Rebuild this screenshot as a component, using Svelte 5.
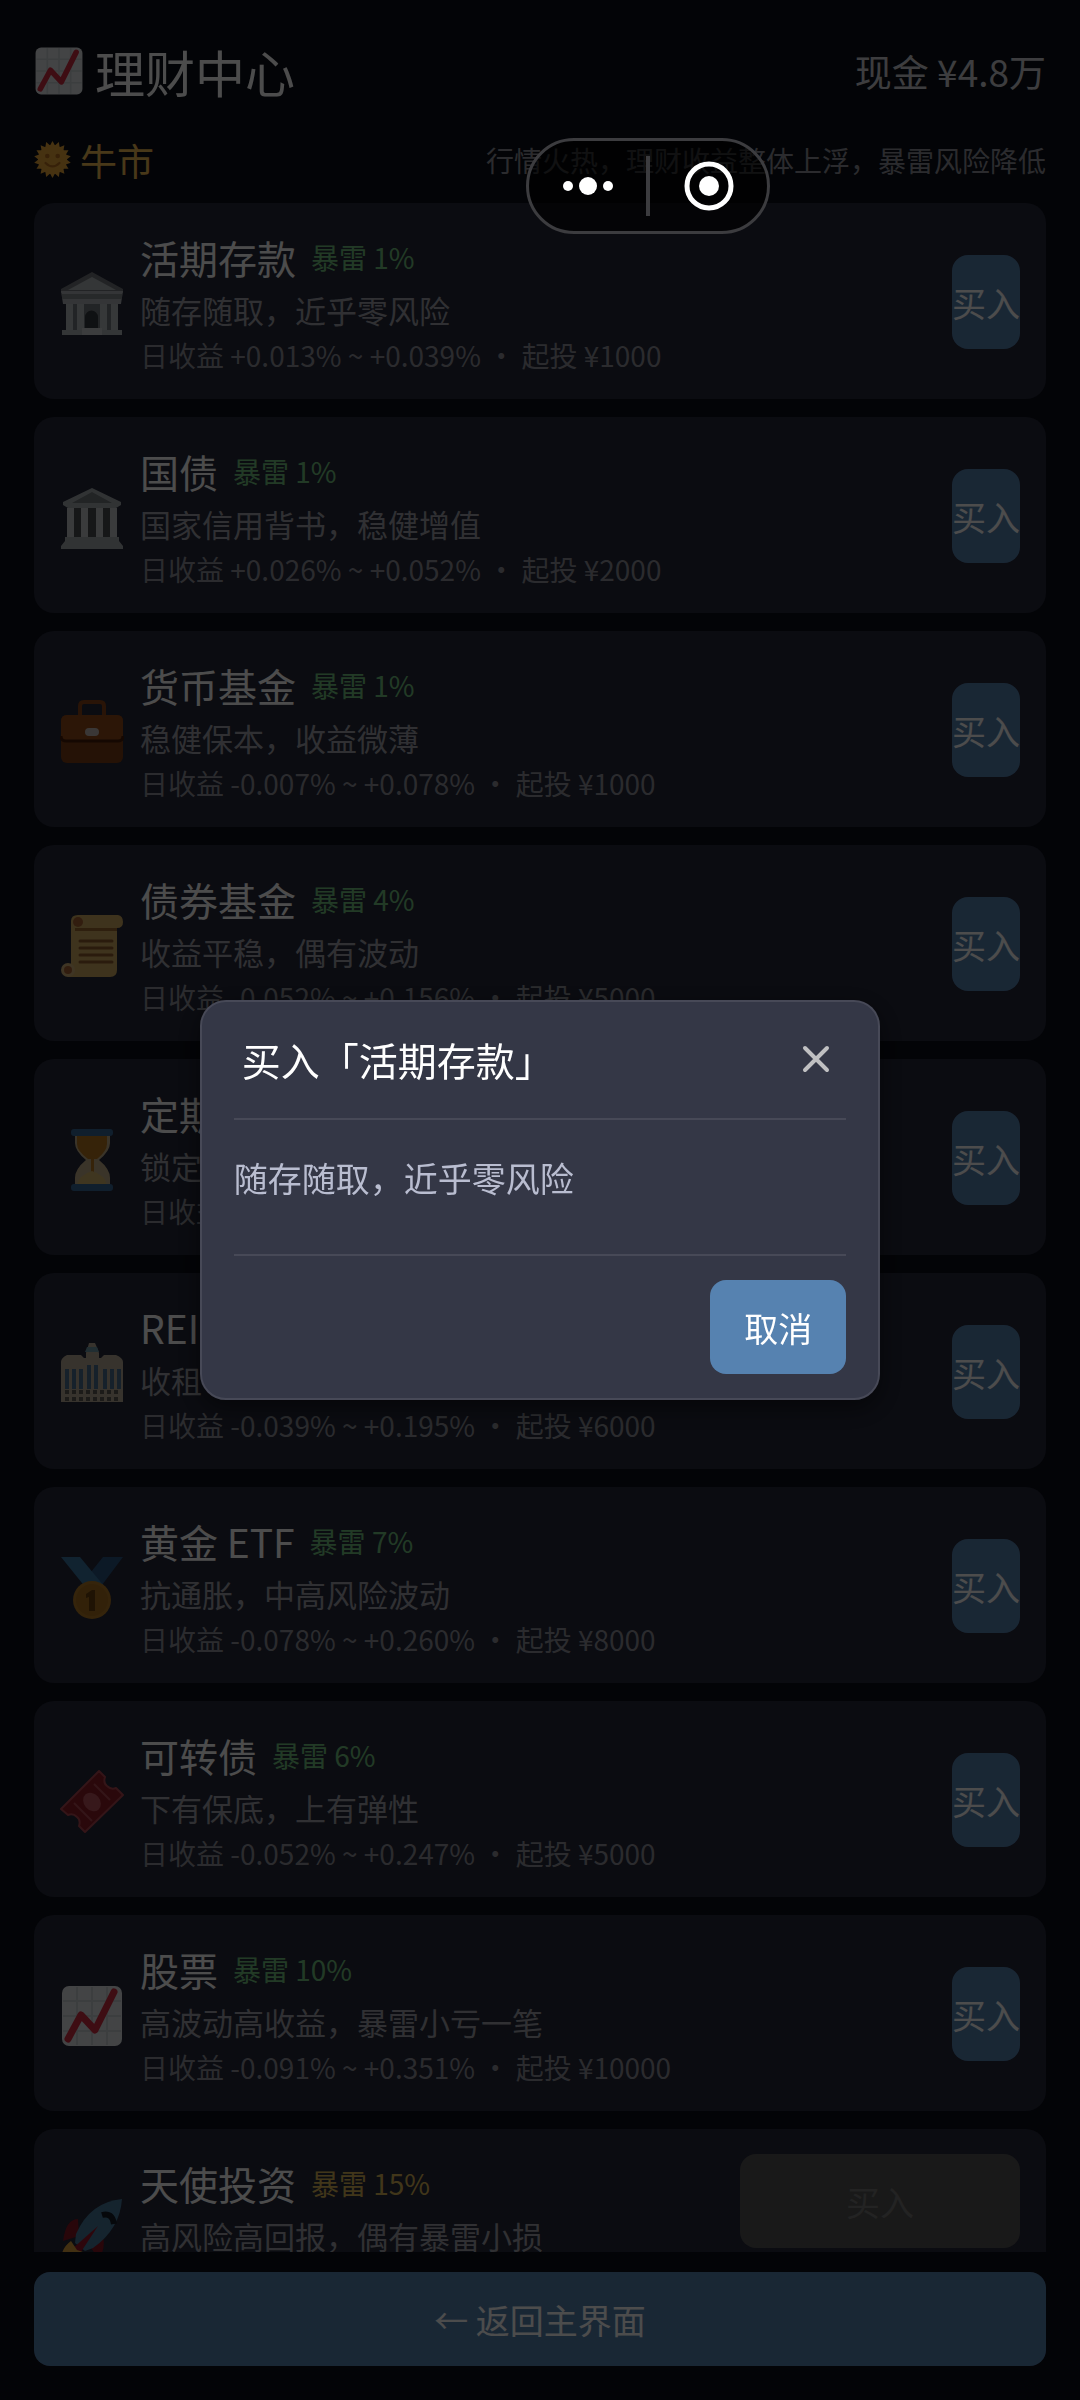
<script>
	// Data
	const products = [
		{ icon: 'bank', name: '活期存款', risk: 1, desc: '随存随取，近乎零风险', low: '+0.013', high: '+0.039', min: 1000 },
		{ icon: 'museum', name: '国债', risk: 1, desc: '国家信用背书，稳健增值', low: '+0.026', high: '+0.052', min: 2000 },
		{ icon: 'briefcase', name: '货币基金', risk: 1, desc: '稳健保本，收益微薄', low: '-0.007', high: '+0.078', min: 1000 },
		{ icon: 'scroll', name: '债券基金', risk: 4, desc: '收益平稳，偶有波动', low: '-0.052', high: '+0.156', min: 5000 },
		{ icon: 'hourglass', name: '定期', risk: null, desc: '锁定', low: null, high: null, min: null },
		{ icon: 'building', name: 'REI', risk: null, desc: '收租', low: '-0.039', high: '+0.195', min: 6000 },
		{ icon: 'medal', name: '黄金 ETF', risk: 7, desc: '抗通胀，中高风险波动', low: '-0.078', high: '+0.260', min: 8000 },
		{ icon: 'ticket', name: '可转债', risk: 6, desc: '下有保底，上有弹性', low: '-0.052', high: '+0.247', min: 5000 },
		{ icon: 'chart', name: '股票', risk: 10, desc: '高波动高收益，暴雷小亏一笔', low: '-0.091', high: '+0.351', min: 10000 },
		{ icon: 'rocket', name: '天使投资', risk: 15, desc: '高风险高回报，偶有暴雷小损', locked: true }
	];

	let selected = $state(products[0]);

	function close() {
		selected = null;
	}
</script>

{#snippet icon(kind)}
	<svg class="icon" viewBox="0 0 64 64" aria-hidden="true">
		{#if kind === 'chart'}
			<rect x="2" y="2" width="60" height="60" rx="7" fill="#dfe4e6" />
			<path d="M17 3v58M32 3v58M47 3v58M3 17h58M3 32h58M3 47h58" stroke="#c8d0d4" stroke-width="2" />
			<path d="M8 55 21 31l14 15L54 8" fill="none" stroke="#d02c42" stroke-width="7" stroke-linecap="round" stroke-linejoin="round" />
		{:else if kind === 'sun'}
			<g fill="#eaa83a">
				{#each Array(18) as _, i}
					<path d="M27 9 32 0l5 9z" transform="rotate({i * 20} 32 32)" />
				{/each}
				<circle cx="32" cy="32" r="25" />
			</g>
			<circle cx="23" cy="26" r="4" fill="#b87020" />
			<circle cx="41" cy="26" r="4" fill="#b87020" />
			<path d="M20 38q12 12 24 0" fill="none" stroke="#b87020" stroke-width="4" stroke-linecap="round" />
		{:else if kind === 'bank'}
			<path d="M32 0 1 17v4h62v-4z" fill="#73777c" />
			<path d="M32 5 8 18h48z" fill="#aeb4b8" />
			<path d="M1 19h62l-2 13H3z" fill="#adb3b7" />
			<path d="M2 22h60v5H2z" fill="#83898d" />
			<path d="M6 32h52v26H6z" fill="#747b80" />
			<path d="M6 32h7v26H6zM17 32h7v26h-7zM40 32h7v26h-7zM51 32h7v26h-7z" fill="#b5bbc0" />
			<path d="M25 58V45a6 6 0 0 1 13 0v13z" fill="#353b40" />
			<path d="M2 58h60v5H2z" fill="#b0b5b9" />
			<path d="M22 56h20v7H22z" fill="#c8cccf" />
		{:else if kind === 'museum'}
			<path d="M32 2 3 16v3l5 3h48l5-3v-3z" fill="#a6acb0" />
			<path d="M32 6 12 17h40z" fill="#72787c" />
			<path d="M7 22h7v29H7zM21 22h7v29h-7zM36 22h7v29h-7zM50 22h7v29h-7z" fill="#c1c5c8" />
			<path d="M14 22h7v29h-7zM28 22h8v29h-8zM43 22h7v29h-7z" fill="#4a4f53" />
			<path d="M5 51h54v4l4 5v3H1v-3l4-5z" fill="#a5aaad" />
		{:else if kind === 'briefcase'}
			<path d="M20 15V6q0-4 4-4h16q4 0 4 4v9" fill="none" stroke="#8a4518" stroke-width="4" />
			<rect x="1" y="15" width="62" height="48" rx="6" fill="#7c3e14" />
			<path d="M1 21q0-6 6-6h50q6 0 6 6v16q0 4-4 4H5q-4 0-4-4z" fill="#934b1a" />
			<path d="M1 36q0 5 5 5h52q5 0 5-5" fill="none" stroke="#481d08" stroke-width="3" />
			<rect x="25" y="28" width="14" height="8" rx="4" fill="#c2bab5" />
		{:else if kind === 'scroll'}
			<path d="M11 7q0-6 7-6h40q5 1 5 7t-6 6v42q0 7-7 7H8l3-10z" fill="#d0ac62" />
			<path d="M15 14h42v3H15z" fill="#9b6a31" />
			<circle cx="18" cy="8" r="5" fill="#a76334" />
			<circle cx="8" cy="56" r="7" fill="#d2b17a" />
			<circle cx="8" cy="56" r="4" fill="#a76334" />
			<path d="M20 27h32M20 34h32M20 41h32M20 48h32" stroke="#8e5b2d" stroke-width="3" stroke-linecap="round" />
		{:else if kind === 'hourglass'}
			<path d="M15 5h35v10q0 8-11 17 11 9 11 18v9H15v-9q0-9 11-18-11-9-11-17z" fill="#c4b08a" />
			<path d="M17 8h30v8q0 7-10 15H28q-11-8-11-15z" fill="#b47621" />
			<path d="M31 31h3v23h-3z" fill="#b47621" />
			<path d="M17 57q2-10 15-14 13 4 15 14z" fill="#d2b46c" />
			<rect x="11" y="1" width="42" height="7" rx="3" fill="#376898" />
			<rect x="11" y="56" width="42" height="7" rx="3" fill="#376898" />
		{:else if kind === 'building'}
			<path d="M1 20q0-4 6-7h14l3 3h2V11q2-6 3-10h6q2 4 4 10v5h2l3-3h12q7 3 7 7v40H1z" fill="#b9ac98" />
			<path d="M25 10h14l-2-5H27z" fill="#6e99a9" />
			<path d="M5 27h4v20H5zM12 27h4v20h-4zM19 27h4v20h-4zM27 23h4v24h-4zM34 23h4v24h-4zM43 27h4v20h-4zM50 27h4v20h-4zM57 27h4v20h-4z" fill="#4b7090" />
			<path d="M5 50h56M5 57h56" stroke="#5f5c55" stroke-width="4" stroke-dasharray="4 3" />
		{:else if kind === 'medal'}
			<path d="M43 1h20L42 29 31 16z" fill="#2a5480" />
			<path d="M1 1h19l24 29-18 2z" fill="#3976a1" />
			<circle cx="32" cy="44" r="19" fill="#b17a27" />
			<circle cx="32" cy="44" r="16" fill="#a87020" />
			<path d="M26 38l6-4h3v21h-6V41l-3 1z" fill="#68420f" />
		{:else if kind === 'ticket'}
			<path d="M39 1l6 6q-2 6 2 9 4 4 9 2l7 7-38 37-6-6q2-6-2-9-4-4-9-2l-7-6z" fill="#8d1c26" stroke="#ae4751" stroke-width="2" stroke-linejoin="round" />
			<path d="M34 14l16 16M14 33l18 18" stroke="#ae4751" stroke-width="2" />
			<ellipse cx="32" cy="32" rx="8" ry="10" transform="rotate(-40 32 32)" fill="#b7515b" />
		{:else if kind === 'rocket'}
			<path d="M18 21q-12 0-15 22l16-5zM43 38q3 15-5 22l-9-13z" fill="#861424" />
			<path d="M62 1Q30 4 16 36l-1 9 10 8 8-3Q60 31 62 1z" fill="#467a9c" />
			<path d="M42 17q10-3 12 9" fill="none" stroke="#141d25" stroke-width="6" />
			<path d="M38 28 12 51l2 5 5 1z" fill="#96162a" />
			<path d="M11 43Q1 50 1 63q15 0 22-9l-6-2z" fill="#dca23c" />
		{/if}
	</svg>
{/snippet}

<main class="page">
	<header class="top">
		<h1>{@render icon('chart')}理财中心</h1>
		<span class="cash">现金 ¥4.8万</span>
	</header>

	<div class="market">
		<span class="market-name">{@render icon('sun')}牛市</span>
		<span class="market-note">行情火热，理财收益整体上浮，暴雷风险降低</span>
	</div>

	<ul class="list">
		{#each products as item}
			<li class="card">
				{@render icon(item.icon)}
				<div class="info">
					<div class="name">
						{item.name}
						{#if item.risk}
							<span class="risk" class:warn={item.risk >= 15}>暴雷 {item.risk}%</span>
						{/if}
					</div>
					<div class="desc">{item.desc}</div>
					{#if !item.locked}
						<div class="meta">
							日收益{#if item.low}&nbsp;{item.low}% ~ {item.high}% ・ 起投 ¥{item.min}{/if}
						</div>
					{/if}
				</div>
				<button class="buy" class:locked={item.locked} disabled={item.locked} onclick={() => (selected = item)}>买入</button>
			</li>
		{/each}
	</ul>

	<button class="back">← 返回主界面</button>
</main>

{#if selected}
	<div class="overlay">
		<div class="modal" role="dialog" aria-modal="true" aria-labelledby="modal-title">
			<div class="modal-head">
				<h2 id="modal-title">买入「{selected.name}」</h2>
				<button class="close" aria-label="关闭" onclick={close}>
					<svg viewBox="0 0 28 28"><path d="M3 3l22 22M25 3 3 25" /></svg>
				</button>
			</div>
			<p class="modal-body">{selected.desc}</p>
			<div class="modal-foot">
				<button class="cancel" onclick={close}>取消</button>
			</div>
		</div>
	</div>
{/if}

<div class="capsule">
	<button aria-label="更多">
		<svg viewBox="0 0 52 52">
			<circle cx="6" cy="26" r="5" />
			<circle cx="26" cy="26" r="9" />
			<circle cx="46" cy="26" r="5" />
		</svg>
	</button>
	<span class="capsule-line"></span>
	<button aria-label="退出">
		<svg viewBox="0 0 52 52">
			<circle cx="26" cy="26" r="22" fill="none" stroke="#fff" stroke-width="5" />
			<circle cx="26" cy="26" r="10" />
		</svg>
	</button>
</div>

<style>
	:global(body) {
		background: #0b0e18;
		font-family: 'Noto Sans CJK SC', sans-serif;
	}

	.page {
		box-sizing: border-box;
		height: 100vh;
		padding: 34px;
		display: flex;
		flex-direction: column;
		color: #fff;
	}

	h1,
	h2,
	p,
	ul {
		margin: 0;
		padding: 0;
		font-weight: 400;
	}

	button {
		font-family: inherit;
		font-size: 34px;
		line-height: 48px;
		padding: 2px 0 0;
		border: none;
		border-radius: 16px;
		color: #fff;
		background: #5682b0;
		cursor: pointer;
	}

	.icon {
		flex-shrink: 0;
		width: 64px;
		height: 64px;
	}

	/* Header */
	.top,
	.market {
		display: flex;
		align-items: center;
		justify-content: space-between;
	}

	.top {
		height: 74px;
	}

	h1 {
		display: flex;
		align-items: center;
		gap: 11px;
		font-size: 50px;
		line-height: 72px;
	}

	h1 .icon {
		width: 50px;
		height: 50px;
	}

	.cash {
		font-size: 37px;
		color: #ccced4;
	}

	.market {
		margin-top: 8px;
		height: 87px;
	}

	.market-name {
		display: flex;
		align-items: center;
		gap: 9px;
		font-size: 37px;
		color: #f0bc54;
	}

	.market-name .icon {
		width: 37px;
		height: 37px;
	}

	.market-note {
		font-size: 28px;
		color: #8f9199;
	}

	/* Product list */
	.list {
		flex: 1;
		min-height: 0;
		overflow: hidden;
		display: flex;
		flex-direction: column;
		gap: 18px;
		list-style: none;
	}

	.card {
		flex-shrink: 0;
		display: flex;
		align-items: center;
		gap: 16px;
		min-height: 148px;
		padding: 25px 26px 23px;
		border-radius: 20px;
		background: #252839;
	}

	.card .icon {
		margin-top: 4px;
	}

	.info {
		flex: 1;
		align-self: flex-start;
		white-space: nowrap;
	}

	.name {
		display: flex;
		align-items: center;
		gap: 15px;
		font-size: 39px;
		line-height: 58px;
	}

	.risk {
		font-size: 28px;
		color: #74c480;
	}

	.risk.warn {
		color: #d9b658;
	}

	.desc {
		font-size: 31px;
		line-height: 48px;
		color: #a0a2aa;
	}

	.meta {
		font-size: 28px;
		line-height: 42px;
		color: #8f9199;
	}

	.buy {
		width: 68px;
		height: 94px;
	}

	.buy.locked {
		align-self: flex-start;
		width: 280px;
		color: #767676;
		background: #545454;
	}

	.back {
		margin-top: 20px;
		height: 94px;
		flex-shrink: 0;
	}

	/* Modal */
	.overlay {
		position: fixed;
		inset: 0;
		display: flex;
		align-items: center;
		justify-content: center;
		background: rgba(0, 0, 0, 0.7);
	}

	.modal {
		box-sizing: border-box;
		width: 63%;
		padding: 24px 32px;
		border: 2px solid #474957;
		border-radius: 26px;
		background: #343746;
		box-shadow: 0 8px 24px rgba(0, 0, 0, 0.5);
	}

	.modal-head {
		display: flex;
		align-items: center;
		justify-content: space-between;
		height: 66px;
		padding: 0 8px 26px;
		border-bottom: 2px solid #474957;
	}

	h2 {
		font-size: 39px;
		line-height: 58px;
		color: #fff;
	}

	.close {
		display: flex;
		align-items: center;
		justify-content: center;
		width: 44px;
		height: 44px;
		padding: 0;
		background: none;
	}

	.close svg {
		width: 28px;
		height: 28px;
		fill: none;
		stroke: #c0c0c2;
		stroke-width: 4;
		stroke-linecap: round;
	}

	.modal-body {
		padding: 34px 0 52px;
		font-size: 34px;
		line-height: 48px;
		color: #b9bdd0;
		border-bottom: 2px solid #474957;
	}

	.modal-foot {
		display: flex;
		justify-content: flex-end;
		padding-top: 24px;
	}

	.cancel {
		width: 136px;
		height: 94px;
	}

	/* Floating capsule */
	.capsule {
		position: fixed;
		top: 138px;
		left: 526px;
		box-sizing: border-box;
		width: 244px;
		height: 96px;
		display: flex;
		align-items: center;
		border: 3px solid #3c3c3f;
		border-radius: 48px;
		background: rgba(0, 0, 0, 0.6);
	}

	.capsule button {
		flex: 1;
		display: flex;
		justify-content: center;
		padding: 0;
		background: none;
	}

	.capsule svg {
		width: 52px;
		height: 52px;
		fill: #fff;
	}

	.capsule-line {
		width: 4px;
		height: 60px;
		background: #3c3c3f;
	}
</style>
